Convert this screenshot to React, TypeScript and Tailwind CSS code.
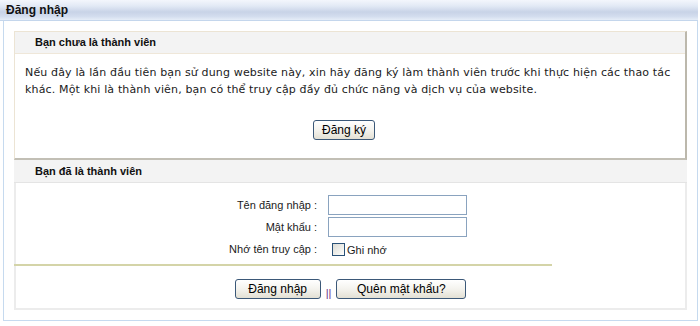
const btn =
  "h-[20px] rounded-[3px] border border-[#3b5878] bg-[linear-gradient(to_bottom,#ffffff_0%,#f4f3ee_50%,#e3e0d4_100%)] text-[12px] text-black leading-none flex items-center justify-center";

function Row({ label, children }: { label: string; children: React.ReactNode }) {
  return (
    <div className="flex h-[22px] items-center">
      <div className="w-[302px] pr-[1px] text-right">{label}</div>
      <div className="ml-[10px] flex items-center">{children}</div>
    </div>
  );
}

export default function App() {
  return (
    <div className="w-[700px] h-[326px] bg-white font-['Liberation_Sans',Arial,sans-serif] text-[#1b1b1b]">
      <div className="w-[698px] h-[21px] border-b border-[#c4d6ec] bg-[linear-gradient(to_bottom,#f3f6fc_0%,#e2e9f5_30%,#c8d3e7_60%,#d3ddee_82%,#e6edf8_100%)] pl-[6px] flex items-center">
        <span className="text-[12px] font-bold text-[#111]">Đăng nhập</span>
      </div>

      <div className="ml-[3px] w-[695px] border-x border-b border-[#c6daef] pt-[10px] pb-[10px] pl-[10px]">
        {/* not yet a member */}
        <div className="w-[673px] border-l border-t border-[#ece4d4] border-r-2 border-b-2 border-r-[#bcb8ac] border-b-[#c2bfb5]">
          <div className="h-[22px] bg-[#f3f3f3] border-b border-[#efe7d9] pl-[20px] flex items-center text-[11px] font-bold text-[#111]">
            Bạn chưa là thành viên
          </div>
          <div className="pt-[10px] pb-[18px] pl-[10px] pr-[8px]">
            <p className="font-['DejaVu_Sans',Verdana,sans-serif] text-[11px] tracking-[0.15px] leading-[17px] whitespace-nowrap">
              Nếu đây là lần đầu tiên bạn sử dung website này, xin hãy đăng ký làm thành viên trước khi thực hiện các thao tác
              <br />
              khác. Một khi là thành viên, bạn có thể truy cập đầy đủ chức năng và dịch vụ của website.
            </p>
            <div className="mt-[22px] flex justify-center pr-[14px]">
              <button className={`${btn} w-[62px]`}>Đăng ký</button>
            </div>
          </div>
        </div>

        {/* already a member */}
        <div className="w-[673px] border-x-2 border-b-2 border-[#ececec]">
          <div className="-mx-[2px] h-[23px] bg-[#f3f3f3] border-b border-[#e4e4e4] pl-[21px] flex items-center text-[11px] font-bold text-[#111]">
            Bạn đã là thành viên
          </div>
          <div className="pt-[11px] pb-[9px] text-[11px]">
            <Row label="Tên đăng nhập :">
              <input className="w-[139px] h-[20px] border border-[#8aa3bf] bg-white outline-none" />
            </Row>
            <Row label="Mật khẩu :">
              <input type="password" className="w-[139px] h-[20px] border border-[#8aa3bf] bg-white outline-none" />
            </Row>
            <Row label="Nhớ tên truy cập :">
              <span className="ml-[4px] w-[13px] h-[13px] border border-[#2a5177] bg-[linear-gradient(135deg,#dcdcd6_0%,#f4f4f0_70%,#ffffff_100%)]" />
              <span className="ml-[2px] mt-[2px]">Ghi nhớ</span>
            </Row>
            <div className="mt-[4px] -ml-[2px] w-[538px] h-[2px] bg-[#d4d4a8]" />
            <div className="mt-[13px] flex justify-center items-center">
              <button className={`${btn} w-[86px]`}>Đăng nhập</button>
              <span className="mx-[5px] mt-[8px] text-[11px] text-[#6d2e86] leading-none">||</span>
              <button className={`${btn} w-[130px]`}>Quên mật khẩu?</button>
            </div>
          </div>
        </div>
      </div>
    </div>
  );
}
